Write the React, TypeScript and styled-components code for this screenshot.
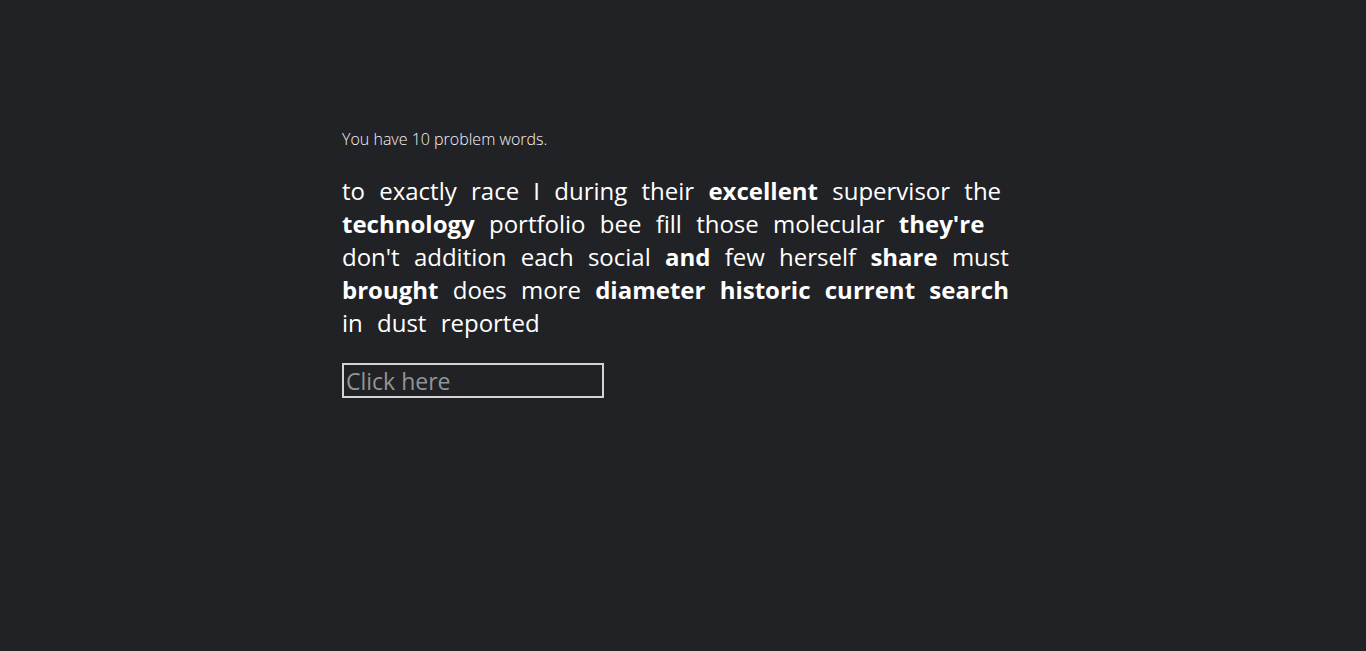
import React from "react";
import styled, { createGlobalStyle } from "styled-components";

const Global = createGlobalStyle`
  html, body { margin: 0; padding: 0; background: #212226; }
  body { font-family: "Open Sans", sans-serif; color: #ffffff; }
`;

const Page = styled.main`
  width: 682px;
  margin: 0 auto;
  padding-top: 129px;
`;

const Status = styled.p`
  margin: 0 0 25px;
  font-size: 16px;
  font-weight: 300;
  line-height: 20px;
  color: #f4f4f4;
`;

const Passage = styled.p`
  margin: 0;
  font-size: 24px;
  line-height: 33px;
  text-align: left;
  word-spacing: 8px;
`;

const Word = styled.span<{ $problem?: boolean }>`
  font-weight: ${(p) => (p.$problem ? 700 : 400)};
`;

const Entry = styled.input`
  display: block;
  box-sizing: border-box;
  margin-top: 24px;
  width: 262px;
  height: 35px;
  padding: 0 2px;
  background: transparent;
  border: 2px solid #d4d4d4;
  color: #ffffff;
  font-family: "Open Sans", sans-serif;
  font-size: 23px;
  outline: none;
  &::placeholder { color: #949494; }
`;

const words: [string, boolean][] = [
  ["to", false], ["exactly", false], ["race", false], ["I", false], ["during", false],
  ["their", false], ["excellent", true], ["supervisor", false], ["the", false],
  ["technology", true], ["portfolio", false], ["bee", false], ["fill", false],
  ["those", false], ["molecular", false], ["they're", true], ["don't", false],
  ["addition", false], ["each", false], ["social", false], ["and", true], ["few", false],
  ["herself", false], ["share", true], ["must", false], ["brought", true], ["does", false],
  ["more", false], ["diameter", true], ["historic", true], ["current", true],
  ["search", true], ["in", false], ["dust", false], ["reported", false],
];

export default function App() {
  return (
    <>
      <Global />
      <Page>
        <Status>You have 10 problem words.</Status>
        <Passage>
          {words.map(([w, b], i) => (
            <React.Fragment key={i}>
              <Word $problem={b}>{w}</Word>{" "}
            </React.Fragment>
          ))}
        </Passage>
        <Entry placeholder="Click here" />
      </Page>
    </>
  );
}
